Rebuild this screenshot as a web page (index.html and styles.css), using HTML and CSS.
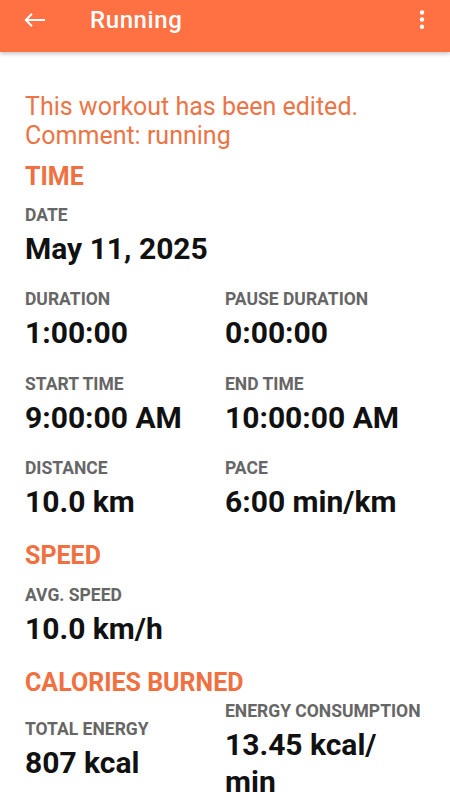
FILE: index.html
```html
<!DOCTYPE html>
<html lang="en">
<head>
<meta charset="utf-8">
<title>Running</title>
<link rel="stylesheet" href="styles.css">
</head>
<body>
<header class="appbar">
  <svg class="back" width="22" height="16" viewBox="0 0 22 16" aria-hidden="true">
    <path d="M21 8H2M8 1.8L1.8 8L8 14.2" fill="none" stroke="#fff" stroke-width="2" stroke-linecap="butt" stroke-linejoin="miter"/>
  </svg>
  <h1 class="title">Running</h1>
  <svg class="more" width="6" height="22" viewBox="0 0 6 22" aria-hidden="true">
    <circle cx="3" cy="3.5" r="2.2" fill="#fff"/>
    <circle cx="3" cy="10.5" r="2.2" fill="#fff"/>
    <circle cx="3" cy="17.7" r="2.2" fill="#fff"/>
  </svg>
</header>
<main class="content">
  <p class="notice">This workout has been edited.<br>Comment: running</p>

  <section class="section section-first">
    <h2 class="section-title">TIME</h2>
    <div class="grid">
      <div class="cell cell-wide">
        <div class="label">DATE</div>
        <div class="value">May 11, 2025</div>
      </div>
      <div class="cell">
        <div class="label">DURATION</div>
        <div class="value">1:00:00</div>
      </div>
      <div class="cell">
        <div class="label">PAUSE DURATION</div>
        <div class="value">0:00:00</div>
      </div>
      <div class="cell">
        <div class="label">START TIME</div>
        <div class="value">9:00:00 AM</div>
      </div>
      <div class="cell">
        <div class="label">END TIME</div>
        <div class="value">10:00:00 AM</div>
      </div>
      <div class="cell">
        <div class="label">DISTANCE</div>
        <div class="value">10.0 km</div>
      </div>
      <div class="cell">
        <div class="label">PACE</div>
        <div class="value">6:00 min/km</div>
      </div>
    </div>
  </section>

  <section class="section">
    <h2 class="section-title">SPEED</h2>
    <div class="grid">
      <div class="cell">
        <div class="label">AVG. SPEED</div>
        <div class="value">10.0 km/h</div>
      </div>
    </div>
  </section>

  <section class="section">
    <h2 class="section-title">CALORIES BURNED</h2>
    <div class="grid grid-center">
      <div class="cell">
        <div class="label">TOTAL ENERGY</div>
        <div class="value">807 kcal</div>
      </div>
      <div class="cell">
        <div class="label">ENERGY CONSUMPTION</div>
        <div class="value">13.45 kcal/<br>min</div>
      </div>
    </div>
  </section>
</main>
</body>
</html>
```
FILE: styles.css
```css
* {
  box-sizing: border-box;
}

html, body {
  margin: 0;
  padding: 0;
  background: #ffffff;
}

body {
  font-family: Roboto, "Noto Sans", "Liberation Sans", sans-serif;
  width: 450px;
  height: 800px;
  overflow: hidden;
}

.appbar {
  height: 52px;
  padding-bottom: 13px;
  background: #ff7043;
  display: flex;
  align-items: center;
  box-shadow: 0 2px 4px rgba(0, 0, 0, 0.22);
  position: relative;
  z-index: 1;
}

.back {
  margin-left: 24px;
  flex: none;
}

.title {
  margin: 0 0 0 44px;
  font-size: 24px;
  font-weight: 500;
  line-height: 24px;
  letter-spacing: 0.6px;
  color: #ffffff;
  flex: 1;
}

.more {
  margin-right: 25px;
  flex: none;
}

.content {
  padding: 0 25px;
}

.notice {
  margin: 39.7px 0 0;
  font-size: 25px;
  line-height: 29px;
  color: #ec7446;
}

.section {
  margin-top: 21.25px;
}

.section-first {
  margin-top: 12px;
}

.section-title {
  margin: 0 0 14.5px;
  font-size: 25px;
  line-height: 29px;
  font-weight: 700;
  color: #f0703f;
}

.grid {
  display: grid;
  grid-template-columns: 200px 200px;
  row-gap: 22.3px;
}

.grid-center {
  align-items: center;
  margin-top: -10.75px;
}

.cell-wide {
  grid-column: 1 / span 2;
}

.label {
  font-size: 17.5px;
  line-height: 20px;
  font-weight: 700;
  color: #666666;
  margin-bottom: 5px;
}

.value {
  font-size: 30px;
  line-height: 37px;
  font-weight: 700;
  color: #111111;
}
```
